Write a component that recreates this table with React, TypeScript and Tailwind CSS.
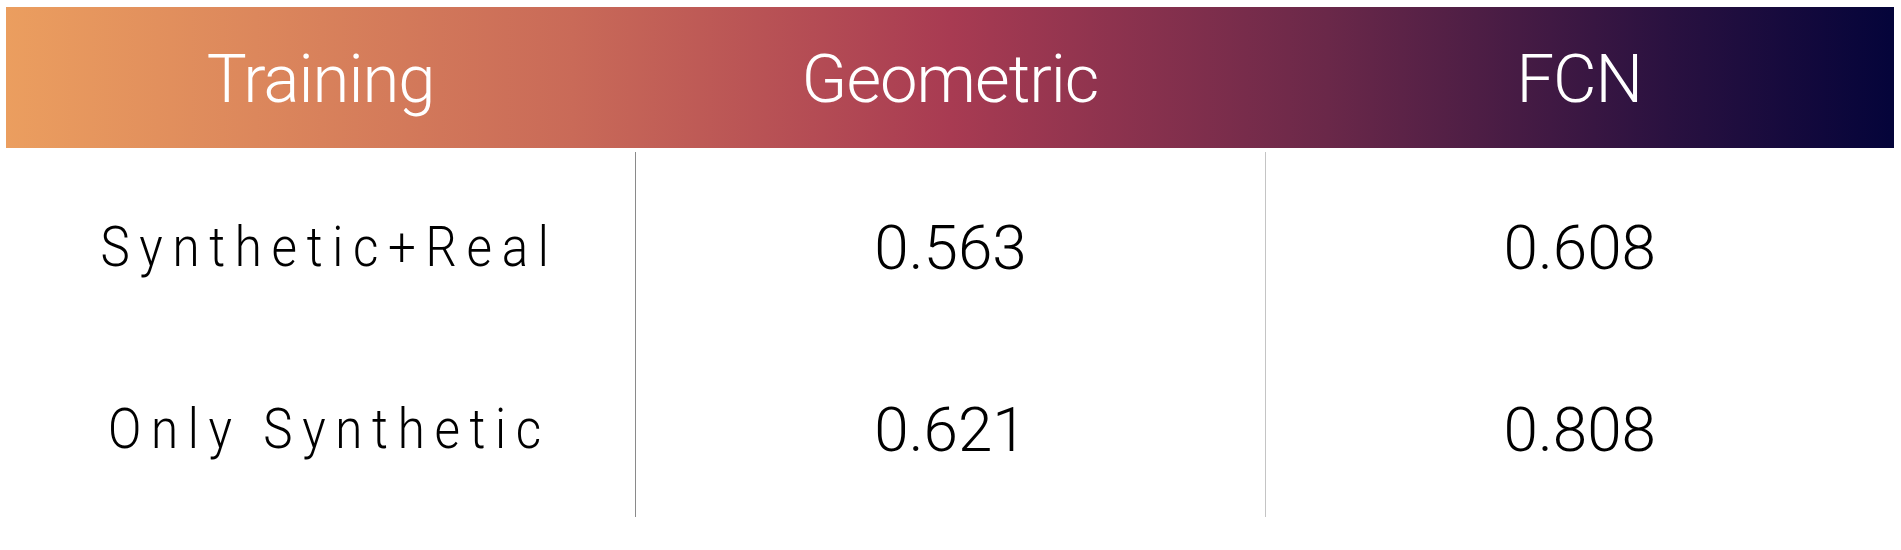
import React from 'react'

type Row = {
  label: string
  geometric: string
  fcn: string
}

const rows: Row[] = [
  { label: 'Synthetic+Real', geometric: '0.563', fcn: '0.608' },
  { label: 'Only Synthetic', geometric: '0.621', fcn: '0.808' },
]

const headers = ['Training', 'Geometric', 'FCN']

export default function App() {
  return (
    <div className="w-[1901px] h-[550px] bg-white pt-[7px] pl-[6px] font-['Roboto','Liberation_Sans',sans-serif]">
      <div className="w-[1888px]">
        {/* Header band */}
        <div className="grid grid-cols-3 h-[141px] bg-[linear-gradient(90deg,#eb9e5f_0%,#c96a58_30%,#a83b52_50%,#6a2849_70%,#2a1140_88%,#04043a_100%)]">
          {headers.map((h) => (
            <div key={h} className="flex items-center justify-center pt-[4px] text-white text-[67px] font-light tracking-[-1px]">
              {h}
            </div>
          ))}
        </div>

        {/* Body */}
        <div className="grid grid-cols-3 mt-[4px] h-[365px]">
          <div className="h-[365px] flex flex-col pt-[4px]">
            {rows.map((r) => (
              <div key={r.label} className="h-[182px] shrink-0 flex items-center justify-center pl-[20px] text-black text-[56px] font-light tracking-[11px] scale-x-[0.88]">
                {r.label}
              </div>
            ))}
          </div>
          <div className="h-[365px] flex flex-col pt-[4px] border-l border-[#8a8a8a]">
            {rows.map((r) => (
              <div key={r.label} className="h-[182px] shrink-0 flex items-center justify-center text-black text-[62px] font-light">
                {r.geometric}
              </div>
            ))}
          </div>
          <div className="h-[365px] flex flex-col pt-[4px] border-l border-[#c4c4c4]">
            {rows.map((r) => (
              <div key={r.label} className="h-[182px] shrink-0 flex items-center justify-center text-black text-[62px] font-light">
                {r.fcn}
              </div>
            ))}
          </div>
        </div>
      </div>
    </div>
  )
}
